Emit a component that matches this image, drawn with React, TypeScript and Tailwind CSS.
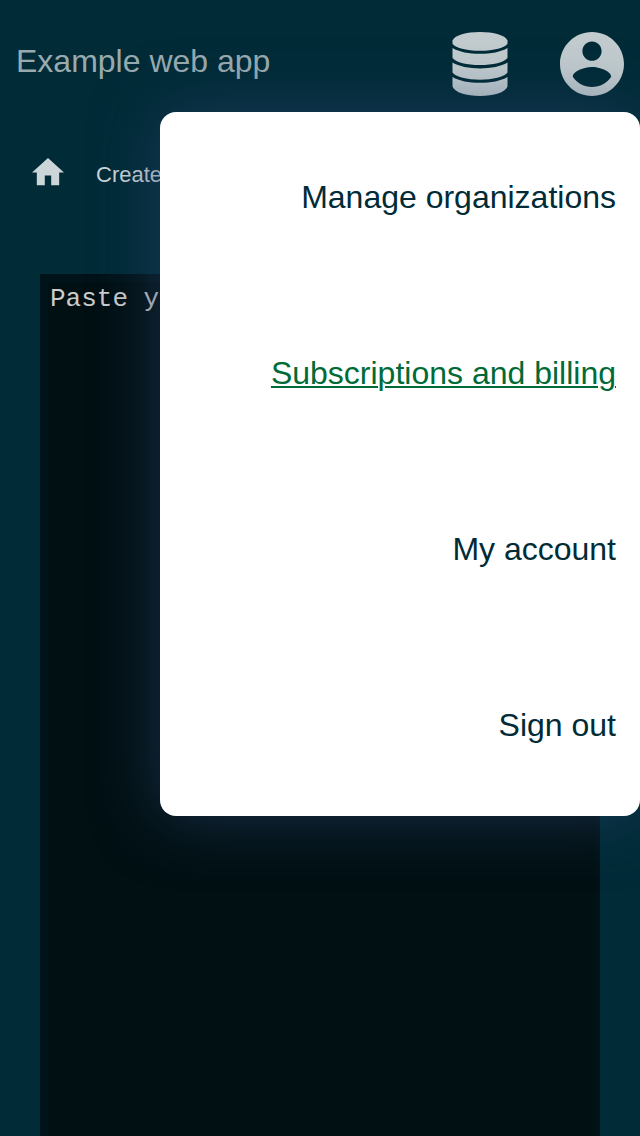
const menuItems = [
  { label: "Manage organizations", active: false },
  { label: "Subscriptions and billing", active: true },
  { label: "My account", active: false },
  { label: "Sign out", active: false },
];

function HomeIcon() {
  return (
    <svg viewBox="2 3 20 17" className="w-8" fill="currentColor" aria-hidden="true">
      <path d="M10 20v-6h4v6h5v-8h3L12 3 2 12h3v8z" />
    </svg>
  );
}

function DatabaseIcon() {
  return (
    <svg viewBox="0 0 56 64" className="h-16 w-14" fill="currentColor" aria-hidden="true">
      <path d="M.5 8.500C3 3 14 0 28 0s25 3 27.500 8.500v3.200C53 15.500 42 18.800 28 18.800S3 15.500 .5 11.700z" />
      <path d="M.5 16C7 20 17 21.800 28 21.800S49 20 55.500 16v10C52 30.500 41 33 28 33S4 30.500 .5 26z" />
      <path d="M.5 30.600C7 34.600 17 36.400 28 36.400s21-1.800 27.500-5.800v10C52 45.200 41 47.700 28 47.700S4 45.200 .5 40.600z" />
      <path d="M.5 45C7 49 17 50.800 28 50.800S49 49 55.500 45v9.500C53 60.500 42 64 28 64S3 60.500 .5 54.500z" />
    </svg>
  );
}

function AccountIcon() {
  return (
    <svg viewBox="2 2 20 20" className="size-16" fill="currentColor" aria-hidden="true">
      <path d="M12 2C6.48 2 2 6.48 2 12s4.48 10 10 10 10-4.48 10-10S17.52 2 12 2zm0 3c1.66 0 3 1.34 3 3s-1.34 3-3 3-3-1.34-3-3 1.34-3 3-3zm0 14.2c-2.5 0-4.71-1.28-6-3.22.03-1.99 4-3.08 6-3.08 1.99 0 5.97 1.09 6 3.08-1.29 1.94-3.5 3.22-6 3.22z" />
    </svg>
  );
}

function AccountMenu() {
  return (
    <nav
      aria-label="Account"
      className="absolute top-full right-0 z-10 w-3/4 rounded-2xl bg-white shadow-[0_0_64px_rgba(39,64,104,0.66)]"
    >
      <ul>
        {menuItems.map((item) => (
          <li key={item.label}>
            <a
              href="#"
              className={
                item.active
                  ? "flex h-44 items-center justify-end px-6 pb-1.5 text-[32px] text-[#006b37] underline decoration-2 underline-offset-2"
                  : "flex h-44 items-center justify-end px-6 pb-1.5 text-[32px] text-[#002b37]"
              }
            >
              {item.label}
            </a>
          </li>
        ))}
      </ul>
    </nav>
  );
}

export default function App() {
  return (
    <div className="flex h-screen flex-col overflow-hidden bg-[#002b37] font-['Liberation_Sans',Arial,sans-serif]">
      <header className="relative flex h-28 shrink-0 items-center justify-between px-4 pt-4">
        <h1 className="pb-1.5 text-[32px] leading-10 text-[#99aaaf]">Example web app</h1>
        <div className="flex gap-[52px] text-[#c2cccf]">
          <button type="button" aria-label="Databases">
            <DatabaseIcon />
          </button>
          <button type="button" aria-label="Account">
            <AccountIcon />
          </button>
        </div>
        <AccountMenu />
      </header>
      <nav aria-label="Breadcrumb" className="flex h-[122px] shrink-0 items-center gap-8 px-8 text-[#ccd5d7]">
        <a href="#" aria-label="Home" className="pb-0.5">
          <HomeIcon />
        </a>
        <a href="#" className="pt-0.5 text-[22px]">
          Create
        </a>
      </nav>
      <main className="-mb-2 flex grow px-10 pt-10">
        <textarea
          aria-label="Content"
          placeholder="Paste your text here"
          className="grow resize-none border-8 border-r-4 border-[#001318] bg-[#001013] px-0.5 py-0.5 font-['Liberation_Mono',monospace] text-[26px] leading-[30px] text-[#cccccc] placeholder:text-[#cccccc]"
        />
      </main>
    </div>
  );
}
